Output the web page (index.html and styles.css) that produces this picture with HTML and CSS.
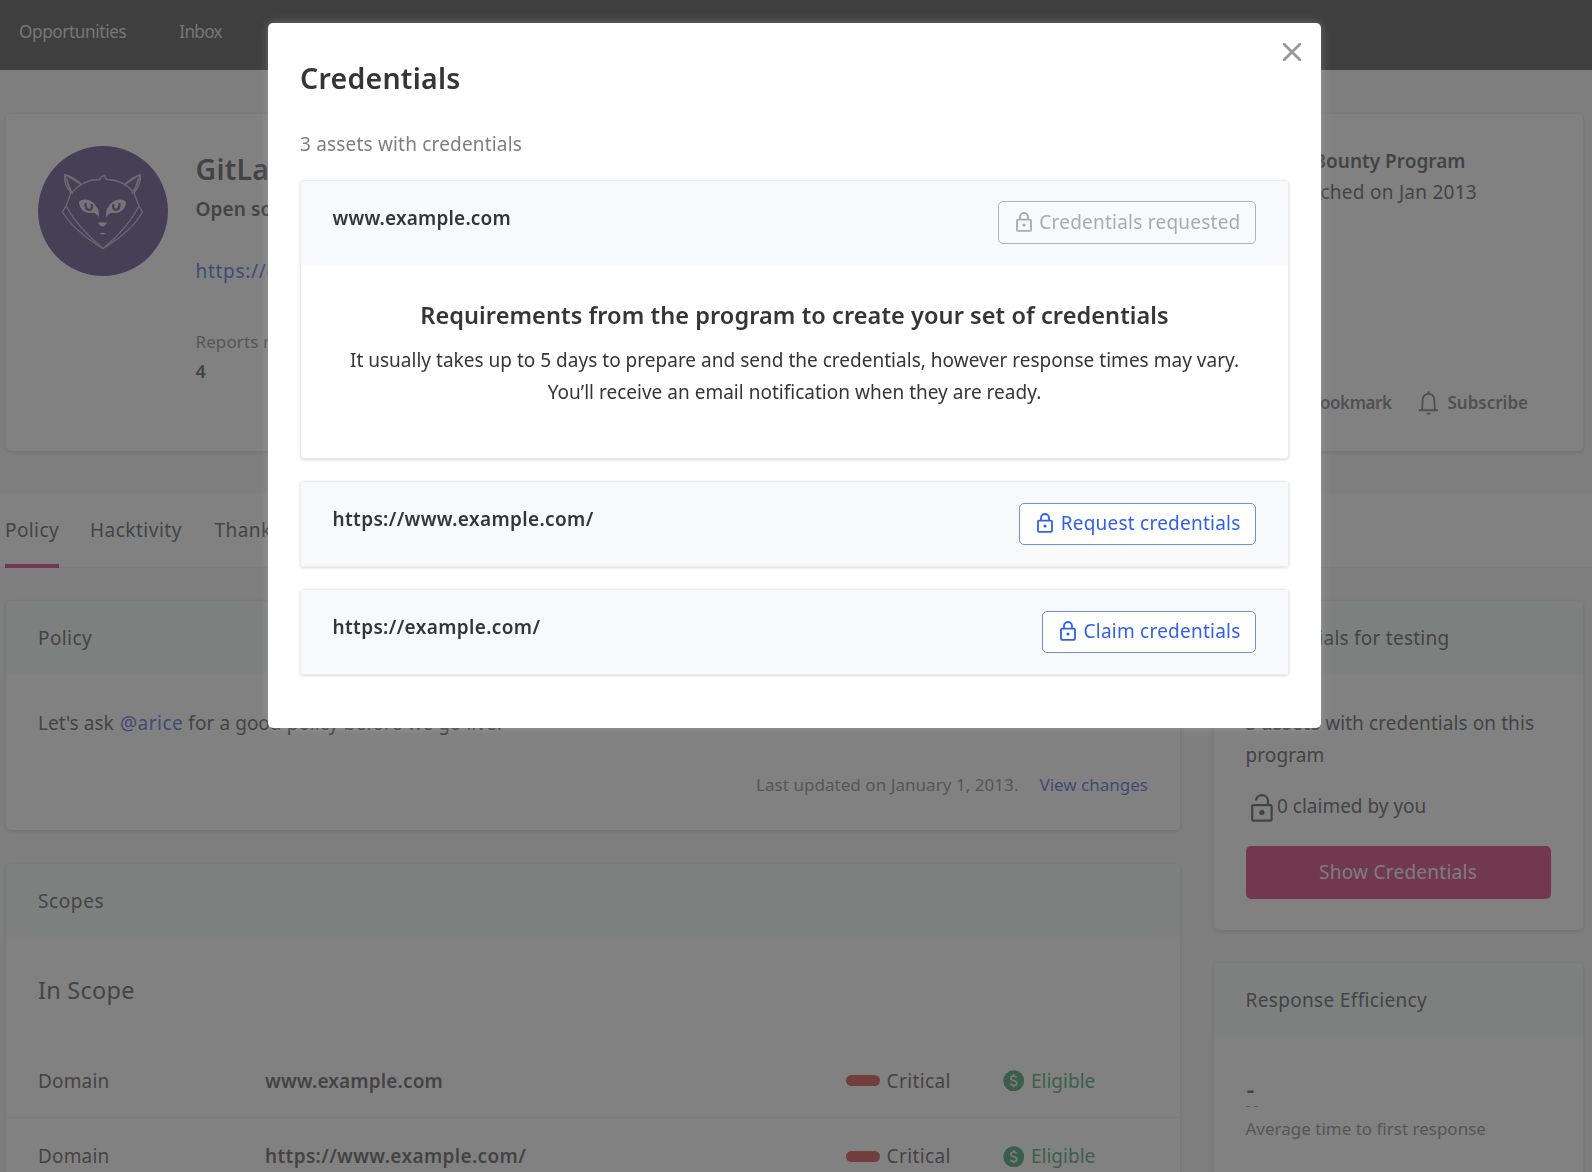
FILE: index.html
```html
<!DOCTYPE html>
<html lang="en">
<head>
<meta charset="utf-8">
<title>Credentials</title>
<link rel="stylesheet" href="styles.css">
</head>
<body>
<svg class="sprite" width="0" height="0" aria-hidden="true">
  <symbol id="lock" viewBox="0 0 16 20">
    <rect x="1" y="7.6" width="14" height="11.2" rx="1" fill="none" stroke="currentColor" stroke-width="1.8"/>
    <path d="M4 7.6V5a4 4 0 0 1 8 0v2.600" fill="none" stroke="currentColor" stroke-width="1.8"/>
    <circle cx="8" cy="13" r="1.600" fill="currentColor"/>
  </symbol>
  <symbol id="dollar" viewBox="0 0 22 22">
    <circle cx="11" cy="11" r="10.700" fill="currentColor"/>
    <path class="dollar-mark" d="M14 7.800C13.400 6.600 12.300 6.100 11 6.100c-1.700 0-3 .8-3 2.300 0 3.400 6.100 1.700 6.100 5.100 0 1.500-1.300 2.400-3.100 2.400-1.600 0-2.800-.7-3.300-2M11 4v2.200M11 15.800V18" fill="none" stroke-width="1.7"/>
  </symbol>
</svg>

<div class="page">
  <nav class="nav">
    <a class="nav-item">Opportunities</a>
    <a class="nav-item nav-inbox">Inbox</a>
  </nav>

  <section class="hero card">
    <svg class="avatar" viewBox="0 0 130 130">
      <circle cx="65" cy="65" r="65" fill="#36256f"/>
      <g fill="none" stroke="#b5aec4" stroke-width="1.300" stroke-linejoin="round">
        <path d="M33 47 26.500 28.500 44 39M33 47Q26 39 26.500 28.500Q36 31 44 39M29 33Q31 42 35 48"/>
        <path d="M96 47 102.500 28.500 86 39M96 47Q103 39 102.500 28.500Q94 31 86 39M100 33Q98 42 94 48"/>
        <path d="M33 47Q46 33 62 33.500Q62 30.500 67 29.500Q66 31 69 33.500Q86 34 96 47L101 60L104.500 66Q94 85 65 102.500Q36 85 24.500 66L28 60Z"/>
        <path d="M28 60Q40 82 65 102.500Q90 82 101 60"/>
      </g>
      <g fill="#d8d6dc">
        <path d="M41 56C46 51 55 54 58.500 61Q62 64 60.500 71.500Q58 66 53 67C46 67.500 41 62 41 56Z"/>
        <path d="M88 56C83 51 74 54 70.500 61Q67 64 68.500 71.500Q71 66 76 67C83 67.500 88 62 88 56Z"/>
        <path d="M60 76.500H69Q67 80.500 64.500 80.500Q62 80.500 60 76.500ZM61.500 87.500Q64.500 86.200 68 87.500Q64.500 89.500 61.500 87.500Z"/>
      </g>
      <path d="M47.500 57Q47 63 51 64Q55 63.500 53.500 58M81.500 57Q82 63 78 64Q74 63.500 75.500 58" fill="none" stroke="#36256f" stroke-width="2.200"/>
    </svg>
    <div class="hero-info">
      <h1 class="hero-name">GitLab</h1>
      <p class="hero-tag">Open source</p>
      <a class="hero-url link">https://gitlab</a>
      <span class="hero-label">Reports resolved</span>
      <b class="hero-value">4</b>
    </div>
    <div class="hero-side">
      <b class="side-kind">Bug Bounty Program</b>
      <span class="side-date">Launched on Jan 2013</span>
      <div class="actions">
        <span class="bookmark">Bookmark</span>
        <svg class="bell" viewBox="0 0 22 26" fill="none" stroke="currentColor" stroke-width="1.900">
          <path d="M1 20.600H21M3.800 20.600Q4.800 18.500 4.800 11C4.800 6 7.500 3.500 11 3.500S17.200 6 17.200 11Q17.200 18.500 18.200 20.600M11 .8V3.500"/>
          <path d="M8.800 23.300H13.200L12.600 25H9.400Z" fill="currentColor" stroke="none"/>
        </svg>
        <span>Subscribe</span>
      </div>
    </div>
  </section>

  <div class="tabs">
    <a class="tab active">Policy</a>
    <a class="tab">Hacktivity</a>
    <a class="tab">Thanks</a>
  </div>

  <div class="columns">
    <main class="main">
      <section class="card">
        <h2 class="card-head head-policy">Policy</h2>
        <div class="policy-body">
          <p class="policy-text">Let's ask <a class="link mention">@arice</a> for a good policy before we go live.</p>
          <p class="updated"><span>Last updated on January 1, 2013.</span><a class="link">View changes</a></p>
        </div>
      </section>
      <section class="card">
        <h2 class="card-head head-scopes">Scopes</h2>
        <h3 class="in-scope">In Scope</h3>
        <div class="scope-row">
          <span>Domain</span><b>www.example.com</b>
          <span class="severity"><i class="pill"></i>Critical</span>
          <span class="eligible"><svg class="coin"><use href="#dollar"/></svg>Eligible</span>
        </div>
        <div class="scope-row">
          <span>Domain</span><b class="long-url">https://www.example.com/</b>
          <span class="severity"><i class="pill"></i>Critical</span>
          <span class="eligible"><svg class="coin"><use href="#dollar"/></svg>Eligible</span>
        </div>
      </section>
    </main>
    <aside class="sidebar">
      <section class="card">
        <h2 class="card-head head-cred">Credentials for testing</h2>
        <div class="cred-body">
          <p class="cred-text"><b>3 assets</b> with credentials on this program</p>
          <p class="claimed">
            <svg class="unlock" viewBox="0 0 22 28">
              <rect x="1.200" y="11.200" width="19.400" height="15.400" rx="1" fill="none" stroke="currentColor" stroke-width="2.200"/>
              <path d="M5 6.500C5.300 3.300 7.800 1.200 11 1.200c3.500 0 6 2.400 6 5.800v4" fill="none" stroke="currentColor" stroke-width="2.200"/>
              <circle cx="10.900" cy="18.400" r="2.600" fill="currentColor"/>
            </svg>
            <span>0 claimed by you</span>
          </p>
          <button class="show">Show Credentials</button>
        </div>
      </section>
      <section class="card">
        <h2 class="card-head head-resp">Response Efficiency</h2>
        <div class="resp-body">
          <b class="dash">-</b>
          <span class="resp-label">Average time to first response</span>
        </div>
      </section>
    </aside>
  </div>
</div>

<div class="overlay"></div>

<div class="modal" role="dialog">
  <svg class="close" viewBox="0 0 18 18"><path d="M1.200 1.200 16.800 16.800M16.800 1.200 1.200 16.800" fill="none" stroke="#999" stroke-width="2.800" stroke-linecap="round"/></svg>
  <h2 class="modal-title">Credentials</h2>
  <p class="modal-sub">3 assets with credentials</p>
  <div class="assets">
    <section class="asset">
      <header class="asset-head">
        <b>www.example.com</b>
        <button class="btn requested"><svg class="lock"><use href="#lock"/></svg>Credentials requested</button>
      </header>
      <div class="asset-body">
        <h3 class="req-title">Requirements from the program to create your set of credentials</h3>
        <p class="req-text">It usually takes up to 5 days to prepare and send the credentials, however response times may vary.<br>You’ll receive an email notification when they are ready.</p>
      </div>
    </section>
    <section class="asset">
      <header class="asset-head">
        <b class="long-url">https://www.example.com/</b>
        <button class="btn"><svg class="lock"><use href="#lock"/></svg>Request credentials</button>
      </header>
    </section>
    <section class="asset">
      <header class="asset-head">
        <b class="long-url">https://example.com/</b>
        <button class="btn"><svg class="lock"><use href="#lock"/></svg>Claim credentials</button>
      </header>
    </section>
  </div>
</div>
</body>
</html>
```
FILE: styles.css
```css
* { box-sizing: border-box; }
html, body { height: 100%; }
body {
  margin: 0;
  overflow: hidden;
  background: #f6f6f6;
  color: #303032;
  font: 400 19px/31px "Noto Sans", "Open Sans", sans-serif;
}
h1, h2, h3, p { margin: 0; font-weight: 400; }
b { font-weight: 600; }
button { font: inherit; margin: 0; }
svg { display: block; flex: none; }
.sprite { position: absolute; }
.link { color: #1c48d8; }

.page { height: 1172px; overflow: hidden; }
.nav {
  display: flex;
  gap: 52px;
  height: 70px;
  padding-left: 19px;
  background: #242424;
  color: #dcdcdc;
  font-size: 17.2px;
  line-height: 63px;
  letter-spacing: -0.4px;
}
.nav-inbox { margin-left: 1px; letter-spacing: -0.7px; }

.card {
  background: #fff;
  border-radius: 5px;
  box-shadow: 0 1px 4px rgba(0, 0, 0, .22);
}

.hero {
  display: flex;
  height: 337px;
  margin: 43.5px 9.5px 0 6px;
}
.avatar { width: 130px; height: 130px; margin: 32.5px 0 0 32px; }
.hero-info {
  display: flex;
  flex-direction: column;
  width: 300px;
  margin-left: 27.5px;
  padding-top: 35px;
  line-height: 30px;
}
.hero-name { font-size: 28.5px; font-weight: 600; line-height: 40px; letter-spacing: .2px; }
.hero-tag { margin-top: 5px; font-weight: 600; letter-spacing: .1px; }
.hero-url { margin-top: 32.5px; letter-spacing: .7px; }
.hero-label { margin-top: 42.5px; font-size: 17px; line-height: 26px; color: #6c6c72; letter-spacing: .1px; }
.hero-value { margin-top: 1px; font-size: 18px; }
.hero-side {
  margin-left: auto;
  padding: 32.5px 54.5px 0 0;
  text-align: right;
}
.side-kind, .side-date { display: block; }
.side-kind { padding-right: 62.5px; }
.side-date { padding-right: 51px; letter-spacing: .26px; }
.actions {
  display: flex;
  align-items: center;
  justify-content: flex-end;
  margin-top: 179px;
  height: 30px;
  font-size: 17px;
  font-weight: 600;
  color: #5a5a5f;
}
.bookmark { letter-spacing: -.45px; }
.bell { width: 21px; height: 26px; margin: 2px 8px 0 27px; }

.tabs {
  display: flex;
  gap: 32.5px;
  height: 75px;
  margin-top: 42.5px;
  padding-left: 5px;
  background: #fdfdfd;
  border-bottom: 1px solid #ececec;
  line-height: 75px;
  letter-spacing: .5px;
}
.tab { height: 74.5px; }
.tab.active { width: 53.5px; margin-right: -1px; border-bottom: 4px solid #d00a60; letter-spacing: .4px; }

.columns {
  display: grid;
  grid-template-columns: 1174px 369px;
  gap: 33.5px;
  margin: 33px 0 0 6px;
}
.main, .sidebar { display: flex; flex-direction: column; gap: 34px; }
.sidebar { gap: 33px; }
.card-head {
  height: 73px;
  padding-left: 32px;
  border-radius: 5px 5px 0 0;
  background: #f5f9f8;
  font-size: 19px;
  line-height: 74px;
}
.head-policy { letter-spacing: .4px; }
.head-scopes { letter-spacing: .6px; }
.head-resp { line-height: 75px; letter-spacing: .34px; }
.head-cred { letter-spacing: .24px; }
.policy-body { height: 155.5px; padding: 33px 32px 0; letter-spacing: 0; }
.policy-text { padding-top: .5px; word-spacing: .2px; }
.mention { margin-left: 1px; letter-spacing: .5px; }
.updated {
  display: flex;
  justify-content: flex-end;
  gap: 21px;
  margin-top: 33.5px;
  font-size: 17px;
  line-height: 26px;
  color: #6c6c72;
}
.updated span { letter-spacing: .05px; }
.in-scope {
  padding: 33.5px 32px 32.5px;
  font-size: 23.5px;
  line-height: 40px;
  letter-spacing: .25px;
}
.scope-row {
  display: grid;
  grid-template-columns: 227px 580.5px 157.5px 1fr;
  height: 75.7px;
  padding-left: 32px;
  border-bottom: 1px solid #ececec;
  line-height: 76.5px;
  letter-spacing: .15px;
}
.long-url { letter-spacing: .36px; }
.severity, .eligible { display: flex; align-items: center; }
.pill { width: 34.5px; height: 11px; margin-right: 6.5px; border-radius: 6px; background: #c81c1c; }
.severity { letter-spacing: .4px; }
.eligible { color: #178a4e; letter-spacing: 0; }
.coin { width: 21.5px; height: 21.5px; margin-right: 6.5px; }
.dollar-mark { stroke: #e6f2ec; }

.cred-body { height: 256px; padding: 32.5px 32px 0; }
.cred-text { line-height: 32px; letter-spacing: .08px; }
.cred-text b { letter-spacing: .1px; }
.claimed { display: flex; align-items: center; height: 31px; margin-top: 20.5px; padding-left: 5px; }
.unlock { width: 22px; height: 28px; margin: 3px 4.5px 0 0; }
.show {
  width: 305px;
  height: 52.5px;
  margin-top: 24px;
  padding: 0;
  border: 0;
  border-radius: 5px;
  background: #cb0a5c;
  color: #f0f0f0;
  letter-spacing: .26px;
}
.resp-body { display: flex; flex-direction: column; align-items: flex-start; height: 200px; padding: 33px 32px 0; }
.dash {
  width: 12px;
  height: 38px;
  padding-left: 1px;
  background: linear-gradient(90deg, #85858b 4px, transparent 4px 8px, #85858b 8px) 0 100% / 12px 1px no-repeat;
  font-size: 24px;
  line-height: 40px;
}
.resp-label { margin-top: 8.5px; font-size: 17px; line-height: 26px; color: #6c6c72; }

.overlay { position: fixed; inset: 0; background: rgba(75, 75, 75, .7); }

.modal {
  position: fixed;
  left: 268px;
  top: 23px;
  width: 1053px;
  height: 705px;
  padding: 34.5px 32px 0 32px;
  border-radius: 5px;
  background: #fff;
  box-shadow: 0 0 10px rgba(190, 190, 190, .35);
  color: #353537;
}
.close { position: absolute; right: 20.5px; top: 20px; width: 18px; height: 18px; }
.modal-title { font-size: 28.5px; font-weight: 600; line-height: 40px; letter-spacing: .25px; }
.modal-sub { margin-top: 31px; line-height: 30px; color: #7c7d88; letter-spacing: .18px; }
.assets { display: flex; flex-direction: column; gap: 22px; margin-top: 21px; }
.asset {
  border: 1px solid #ececec;
  border-radius: 4px;
  background: #fff;
  box-shadow: 0 1px 3px rgba(0, 0, 0, .14);
}
.asset-head {
  display: flex;
  justify-content: space-between;
  height: 84px;
  padding: 0 32px 0 31.5px;
  background: #f7f9fa;
  line-height: 75px;
  letter-spacing: .18px;
}
.asset-body { height: 193.5px; padding-top: 32px; text-align: center; }
.req-title { font-size: 23.5px; font-weight: 600; line-height: 36px; letter-spacing: .08px; }
.req-text { margin-top: 11px; line-height: 32px; letter-spacing: .015px; }
.btn {
  display: flex;
  align-items: center;
  height: 42.5px;
  margin-top: 20.5px;
  padding: 0 14.5px 1px 17px;
  border: 1.5px solid #6c8cf3;
  border-radius: 5px;
  background: #fff;
  color: #2f60ee;
  line-height: 40px;
  letter-spacing: .23px;
}
.requested { border-color: #b0b1b8; background: transparent; color: #a9aab2; }
.lock { width: 16px; height: 20px; margin: 0 7.5px 0 0; }
```
